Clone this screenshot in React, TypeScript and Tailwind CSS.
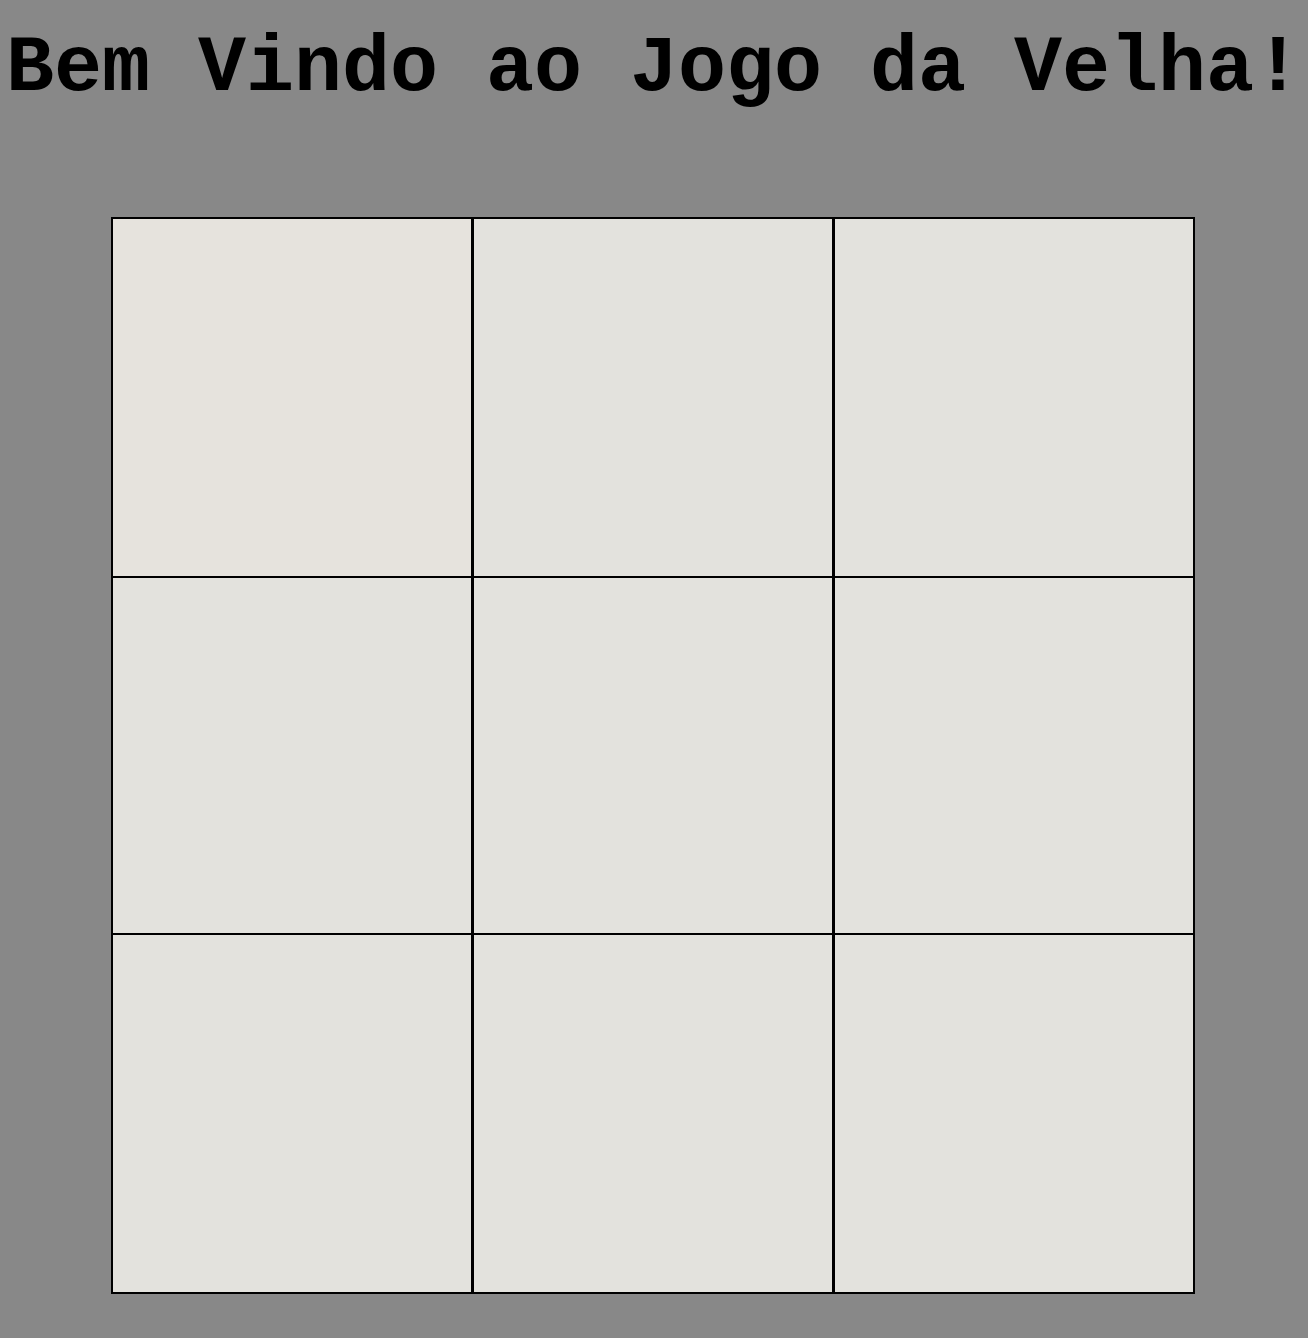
const cells = Array.from({ length: 9 }, (_, i) => i);

export default function App() {
  return (
    <div className="min-h-[1338px] bg-[#888888] pt-[24px]">
      <h1 className="text-center font-['Liberation_Mono','Courier_New',monospace] text-[80px] font-bold leading-[90px] text-black">
        Bem Vindo ao Jogo da Velha!
      </h1>

      <div className="ml-[111px] mt-[103px] grid h-[1077px] w-[1084px] grid-cols-3 grid-rows-[357px_355px_357px] gap-x-[3px] gap-y-[2px] border-2 border-black bg-black">
        {cells.map((i) => (
          <div key={i} className={i === 0 ? "bg-[#e6e3dd]" : "bg-[#e3e2dd]"} />
        ))}
      </div>
    </div>
  );
}
